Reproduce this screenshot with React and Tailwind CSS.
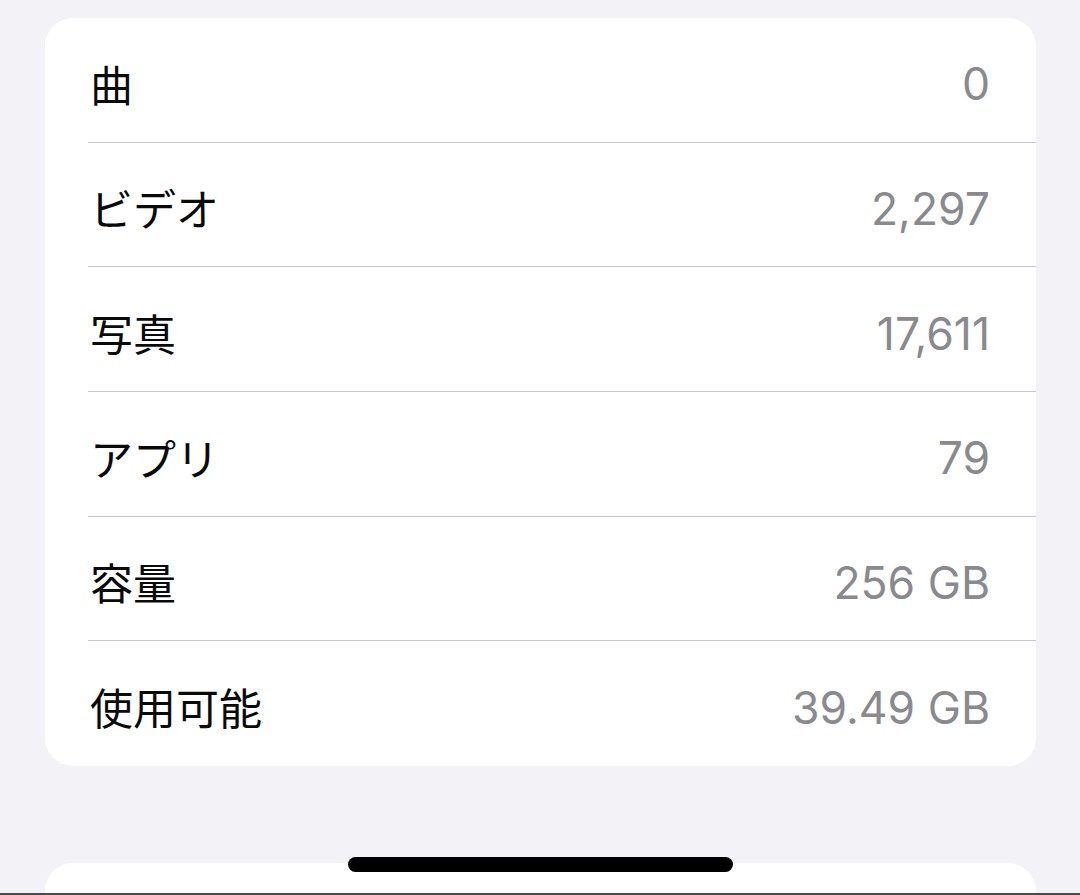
import React from "react";

const rows = [
  ["曲", "0"],
  ["ビデオ", "2,297"],
  ["写真", "17,611"],
  ["アプリ", "79"],
  ["容量", "256 GB"],
  ["使用可能", "39.49 GB"],
];

export default function App() {
  return (
    <div className="relative h-[895px] w-[1080px] overflow-hidden bg-[#f2f2f7]">
      <div className="flex flex-col pt-[18px] pl-[45px] pr-[44px]">
        <div className="rounded-[28px] bg-white pl-[43px]">
          {rows.map(([label, value], i) => (
            <div
              key={label}
              className={
                "flex h-[124.67px] items-center justify-between pr-[46px] pt-[6px] " +
                (i < rows.length - 1 ? "border-b border-[#c8c7cc]" : "")
              }
            >
              <span className="pl-[2px] text-[43px] text-[#0a0a0a] [font-family:'Noto_Sans_CJK_JP',sans-serif]">
                {label}
              </span>
              <span className="translate-y-[2px] text-[44.5px] text-[#8a8a8e] [font-family:Inter,'Liberation_Sans',sans-serif]">
                {value}
              </span>
            </div>
          ))}
        </div>
        <div className="mt-[97px] h-[60px] rounded-t-[28px] bg-white" />
      </div>
      <div className="absolute left-[348px] top-[857px] h-[15px] w-[385px] rounded-full bg-black" />
      <div className="absolute bottom-0 left-0 h-[2px] w-full bg-[#4a4a4a]" />
    </div>
  );
}
